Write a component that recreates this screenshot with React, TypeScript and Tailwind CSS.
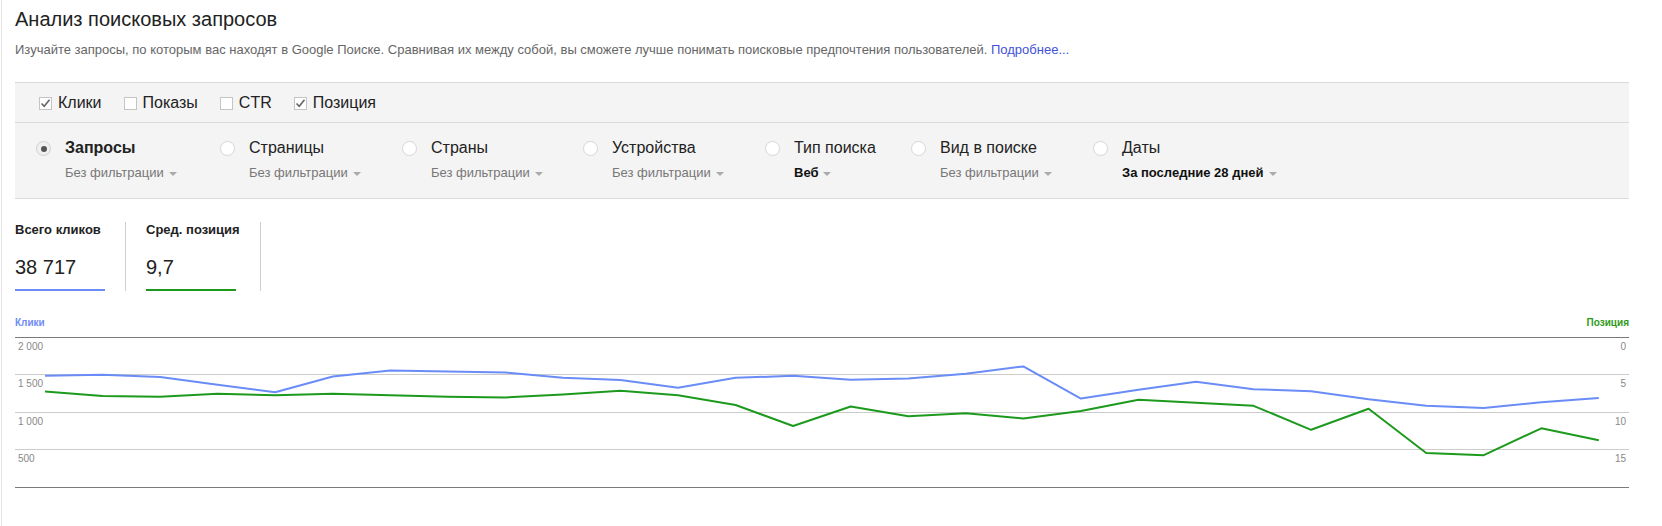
import { useMemo } from "react"

const metrics = [
  { label: "Клики", checked: true },
  { label: "Показы", checked: false },
  { label: "CTR", checked: false },
  { label: "Позиция", checked: true },
]

const groups = [
  { title: "Запросы", sub: "Без фильтрации", active: true, strong: false, w: "w-[184px]" },
  { title: "Страницы", sub: "Без фильтрации", active: false, strong: false, w: "w-[182px]" },
  { title: "Страны", sub: "Без фильтрации", active: false, strong: false, w: "w-[181px]" },
  { title: "Устройства", sub: "Без фильтрации", active: false, strong: false, w: "w-[182px]" },
  { title: "Тип поиска", sub: "Веб", active: false, strong: true, w: "w-[146px]" },
  { title: "Вид в поиске", sub: "Без фильтрации", active: false, strong: false, w: "w-[182px]" },
  { title: "Даты", sub: "За последние 28 дней", active: false, strong: true, w: "w-[220px]" },
]

// daily values for the last 28 days
const clicks = [
  1490, 1503, 1472, 1369, 1271, 1480, 1561, 1547, 1534, 1463, 1432, 1329, 1463, 1490,
  1436, 1453, 1517, 1614, 1185, 1302, 1409, 1311, 1284, 1177, 1091, 1060, 1137, 1194,
]
const positions = [
  7.2, 7.8, 7.9, 7.5, 7.7, 7.5, 7.7, 7.9, 8.0, 7.6, 7.1, 7.7, 9.0, 11.8, 9.2, 10.5, 10.1,
  10.8, 9.8, 8.3, 8.7, 9.1, 12.3, 9.5, 15.4, 15.7, 12.1, 13.7,
]

const CHART_W = 1614
const TOP = 0.5
const SPAN = 150
const STEP = 57.55
const X0 = 30

function Checkbox({ checked }: { checked: boolean }) {
  return (
    <span className="flex h-[13px] w-[13px] items-center justify-center border border-[#c4c4c4] bg-white">
      {checked && (
        <svg width="11" height="11" viewBox="0 0 11 11">
          <path d="M1.5 5.5 L4.2 8.2 L9.5 1.8" fill="none" stroke="#666" strokeWidth="1.6" />
        </svg>
      )}
    </span>
  )
}

function Radio({ active }: { active: boolean }) {
  return (
    <span
      className={`mt-[3px] flex h-[15px] w-[15px] shrink-0 items-center justify-center rounded-full border ${
        active ? "border-[#d0d0d0] bg-[#f0f0f0]" : "border-[#d6d6d6] bg-white"
      }`}
    >
      {active && <span className="h-[6px] w-[6px] rounded-full bg-[#555]" />}
    </span>
  )
}

function Caret() {
  return <span className="ml-[5px] mt-[2px] inline-block border-x-[4px] border-t-[4px] border-x-transparent border-t-[#aaa]" />
}

function Chart() {
  const { bluePts, greenPts } = useMemo(() => {
    const blue = clicks
      .map((c, i) => `${(X0 + i * STEP).toFixed(1)},${(TOP + SPAN - (c / 2000) * SPAN).toFixed(1)}`)
      .join(" ")
    const green = positions
      .map((p, i) => `${(X0 + i * STEP).toFixed(1)},${(TOP + (p / 20) * SPAN).toFixed(1)}`)
      .join(" ")
    return { bluePts: blue, greenPts: green }
  }, [])

  const left = ["2 000", "1 500", "1 000", "500"]
  const right = ["0", "5", "10", "15"]
  const grid = [0.5, 37.5, 75.5, 112.5, 150.5]

  return (
    <svg width={CHART_W} height="152" className="block">
      {grid.map((y, i) => (
        <line
          key={y}
          x1="0"
          x2={CHART_W}
          y1={y}
          y2={y}
          stroke={i === 0 || i === 4 ? "#7a7a7a" : "#cccccc"}
          strokeWidth="1"
        />
      ))}
      {left.map((t, i) => (
        <text key={t} x="3" y={grid[i] + 12} fontSize="10" fill="#888" fontFamily="Liberation Sans, Arial, sans-serif">
          {t}
        </text>
      ))}
      {right.map((t, i) => (
        <text
          key={t}
          x={CHART_W - 3}
          y={grid[i] + 12}
          fontSize="10"
          fill="#888"
          textAnchor="end"
          fontFamily="Liberation Sans, Arial, sans-serif"
        >
          {t}
        </text>
      ))}
      <polyline points={bluePts} fill="none" stroke="#6a8cf7" strokeWidth="2" strokeLinejoin="round" />
      <polyline points={greenPts} fill="none" stroke="#1d9a1d" strokeWidth="2" strokeLinejoin="round" />
    </svg>
  )
}

export default function App() {
  return (
    <div className="min-h-screen bg-white font-['Liberation_Sans',Arial,sans-serif] text-[#222]">
      <div className="ml-px min-h-screen border-l border-[#e3e3e3] pl-[13px] pt-[7px]">
        <div className="w-[1614px]">
          {/* Header */}
          <h1 className="text-[20px] leading-[24px] text-[#222]">Анализ поисковых запросов</h1>
          <p className="mt-[11px] text-[13px] leading-[16px] text-[#666]">
            Изучайте запросы, по которым вас находят в Google Поиске. Сравнивая их между собой, вы сможете лучше
            понимать поисковые предпочтения пользователей.{" "}
            <a href="#" className="text-[#3f51d9]">
              Подробнее...
            </a>
          </p>

          {/* Filters panel */}
          <div className="mt-[24px] border-y border-[#dadada] bg-[#f4f4f4]">
            <div className="flex h-[40px] items-center gap-[22px] border-b border-[#dadada] pl-[24px] pt-px">
              {metrics.map((m) => (
                <label key={m.label} className="flex items-center gap-[6px] text-[16px] leading-[20px] text-[#222]">
                  <Checkbox checked={m.checked} />
                  {m.label}
                </label>
              ))}
            </div>
            <div className="flex h-[75px] pl-[21px] pt-[15px]">
              {groups.map((g) => (
                <div key={g.title} className={`flex shrink-0 items-start gap-[14px] ${g.w}`}>
                  <Radio active={g.active} />
                  <div>
                    <div className={`text-[16px] leading-[20px] text-[#222] ${g.active ? "font-bold" : ""}`}>
                      {g.title}
                    </div>
                    <div
                      className={`mt-[7px] flex items-center text-[13px] leading-[16px] ${
                        g.strong ? "font-bold text-[#111]" : "text-[#777]"
                      }`}
                    >
                      {g.sub}
                      <Caret />
                    </div>
                  </div>
                </div>
              ))}
            </div>
          </div>

          {/* Totals */}
          <div className="mt-[23px] flex">
            <div className="min-w-[90px] border-r border-[#cfcfcf] pr-5">
              <div className="text-[13px] font-bold leading-[16px]">Всего кликов</div>
              <div className="mt-[17px] text-[20px] leading-[24px]">38 717</div>
              <div className="mt-[10px] h-[2px] w-[90px] bg-[#6a8cf7]" />
            </div>
            <div className="min-w-[90px] border-r border-[#cfcfcf] px-5">
              <div className="text-[13px] font-bold leading-[16px]">Сред. позиция</div>
              <div className="mt-[17px] text-[20px] leading-[24px]">9,7</div>
              <div className="mt-[10px] h-[2px] w-[90px] bg-[#1d9a1d]" />
            </div>
          </div>

          {/* Chart */}
          <div className="mt-[26px] flex justify-between text-[10px] font-bold leading-[12px]">
            <span className="text-[#6f8cf5]">Клики</span>
            <span className="text-[#2f9a1a]">Позиция</span>
          </div>
          <div className="mt-[8px]">
            <Chart />
          </div>
        </div>
      </div>
    </div>
  )
}
